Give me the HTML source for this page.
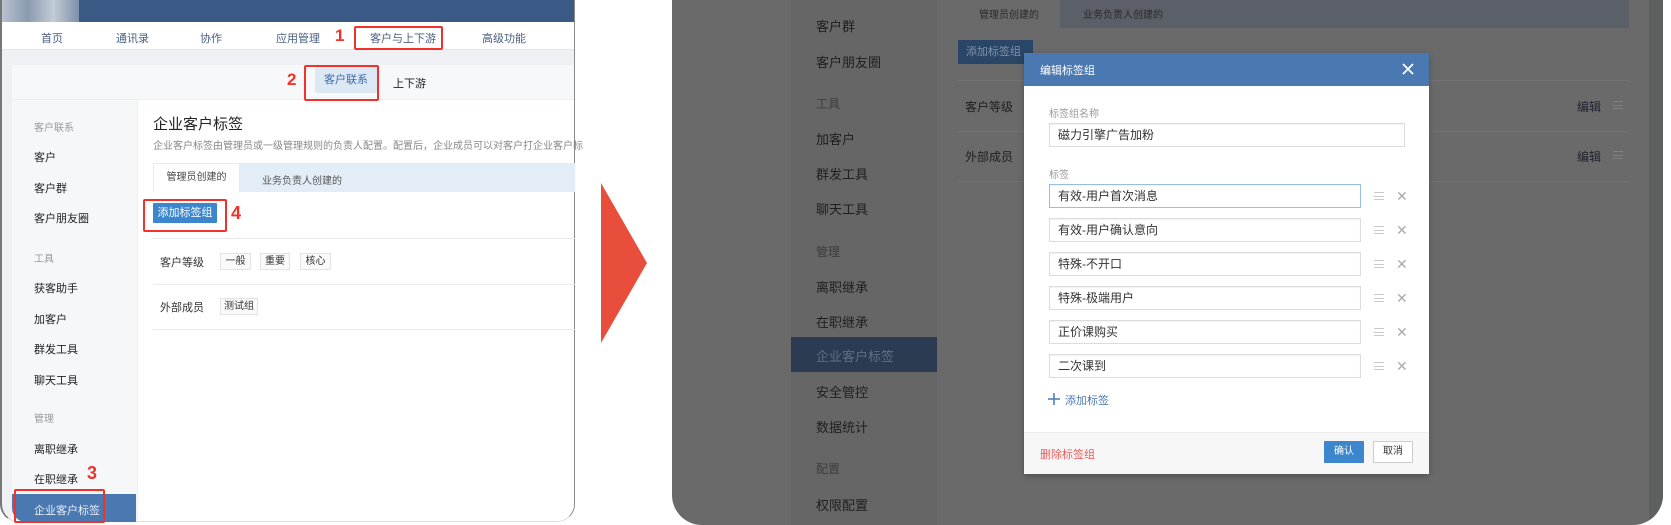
<!DOCTYPE html>
<html><head><meta charset="utf-8"><style>
*{margin:0;padding:0;box-sizing:border-box}
body{width:1671px;height:525px;background:#fff;position:relative;overflow:hidden;font-family:"Liberation Sans","Noto Sans CJK SC",sans-serif;}
.a{position:absolute;white-space:nowrap}
.red{color:#f0322a;font-weight:bold;font-size:17px}
.rb{position:absolute;border:2px solid #f0322a;border-radius:2px}
.t13{font-size:12px;color:#333}
.tag{position:absolute;border:1px solid #e3e3e3;background:#fafafa;font-size:10px;color:#333;text-align:center;line-height:15px;height:17px}
.inp{position:absolute;left:1049px;width:312px;height:24px;border:1px solid #dcdcdc;background:#fff;font-size:12px;color:#333;padding-left:8px;line-height:22px;box-shadow:inset 0 1px 1px rgba(0,0,0,.05)}
.ham{position:absolute;width:10px;height:8px;border-top:1px solid #c9c9c9;border-bottom:1px solid #c9c9c9}
.ham:after{content:"";position:absolute;left:0;right:0;top:2.5px;border-top:1px solid #c9c9c9}
.ham.d{border-color:#808080}.ham.d:after{border-color:#808080}
.x{position:absolute;font-size:14px;color:#aaa;line-height:14px}
.sd{position:absolute;left:816px;font-size:13px;color:#1f1f1f}
.sg{position:absolute;left:816px;font-size:12px;color:#3d3d3d}
</style></head><body>

<!-- LEFT PANEL -->
<div class="a" style="left:0;top:0;width:575px;height:522px;border-right:1px solid #8a8a8a;border-left:2px solid #777;border-bottom:1px solid #ddd;border-radius:0 0 18px 18px;overflow:hidden;background:#eef0f3">
  <div class="a" style="left:0;top:0;width:575px;height:22px;background:#3a5a85"></div>
  <div class="a" style="left:0;top:0;width:77px;height:22px;background:linear-gradient(90deg,#b8c2cf,#8a9ab0,#c3ccd6,#7d90aa)"></div>
  <div class="a" style="left:0;top:22px;width:575px;height:28px;background:#fff;border-bottom:1px solid #e5e5e5"></div>
  <div class="a" style="left:10px;top:65px;width:570px;height:460px;background:#fff"></div>
  <div class="a" style="left:10px;top:65px;width:570px;height:35px;background:#f7f8fa;border-bottom:1px solid #eceef1"></div>
  <div class="a" style="left:10px;top:100px;width:126px;height:425px;background:#f6f7f9;border-right:1px solid #eceef1"></div>
</div>
<div class="a t13" style="left:41px;top:30px;font-size:11px;color:#4a5f80">首页</div>
<div class="a t13" style="left:116px;top:30px;font-size:11px;color:#4a5f80">通讯录</div>
<div class="a t13" style="left:200px;top:30px;font-size:11px;color:#4a5f80">协作</div>
<div class="a t13" style="left:276px;top:30px;font-size:11px;color:#4a5f80">应用管理</div>
<div class="a red" style="left:335px;top:26px">1</div>
<div class="a t13" style="left:370px;top:30px;font-size:11px;color:#4a5f80">客户与上下游</div>
<div class="a" style="left:368px;top:48px;width:58px;height:2px;background:#3a5a85"></div>
<div class="rb" style="left:354px;top:26px;width:89px;height:24px"></div>
<div class="a t13" style="left:482px;top:30px;font-size:11px;color:#4a5f80">高级功能</div>

<div class="a red" style="left:287px;top:70px">2</div>
<div class="a" style="left:315px;top:67px;width:62px;height:26px;background:#dde8f5;border-radius:2px;font-size:11px;color:#3d6ca6;text-align:center;line-height:26px">客户联系</div>
<div class="rb" style="left:304px;top:65px;width:75px;height:36px"></div>
<div class="a" style="left:393px;top:75px;font-size:11px;color:#222">上下游</div>

<div class="a" style="left:34px;top:119px;font-size:10px;color:#999">客户联系</div>
<div class="a" style="left:34px;top:149px;font-size:11px;color:#222">客户</div>
<div class="a" style="left:34px;top:180px;font-size:11px;color:#222">客户群</div>
<div class="a" style="left:34px;top:210px;font-size:11px;color:#222">客户朋友圈</div>
<div class="a" style="left:34px;top:250px;font-size:10px;color:#999">工具</div>
<div class="a" style="left:34px;top:280px;font-size:11px;color:#222">获客助手</div>
<div class="a" style="left:34px;top:311px;font-size:11px;color:#222">加客户</div>
<div class="a" style="left:34px;top:341px;font-size:11px;color:#222">群发工具</div>
<div class="a" style="left:34px;top:372px;font-size:11px;color:#222">聊天工具</div>
<div class="a" style="left:34px;top:410px;font-size:10px;color:#999">管理</div>
<div class="a" style="left:34px;top:441px;font-size:11px;color:#222">离职继承</div>
<div class="a" style="left:34px;top:471px;font-size:11px;color:#222">在职继承</div>
<div class="a red" style="left:87px;top:463px;font-size:18px">3</div>
<div class="a" style="left:12px;top:494px;width:124px;height:28px;background:#4a78b0;border-bottom-left-radius:14px"></div>
<div class="a" style="left:34px;top:502px;font-size:11px;color:#e8eef6">企业客户标签</div>
<div class="rb" style="left:14px;top:489px;width:91px;height:34px"></div>

<div class="a" style="left:153px;top:113px;font-size:15px;color:#222">企业客户标签</div>
<div class="a" style="left:153px;top:137px;font-size:10px;color:#888">企业客户标签由管理员或一级管理规则的负责人配置。配置后，企业成员可以对客户打企业客户标</div>
<div class="a" style="left:240px;top:163px;width:335px;height:29px;background:#e3edf8"></div>
<div class="a" style="left:153px;top:163px;width:87px;height:29px;background:#fff;border:1px solid #e6ebf1;border-bottom:none;font-size:10px;color:#444;text-align:center;line-height:28px">管理员创建的</div>
<div class="a" style="left:262px;top:172px;font-size:10px;color:#555">业务负责人创建的</div>
<div class="a" style="left:153px;top:203px;width:64px;height:20px;background:#3b86cc;color:#fff;font-size:11px;text-align:center;line-height:20px;border-radius:1px">添加标签组</div>
<div class="rb" style="left:143px;top:199px;width:84px;height:33px"></div>
<div class="a red" style="left:231px;top:203px;font-size:18px">4</div>
<div class="a" style="left:153px;top:238px;width:422px;height:1px;background:#ebebeb"></div>
<div class="a" style="left:160px;top:254px;font-size:11px;color:#333">客户等级</div>
<div class="tag" style="left:220px;top:253px;width:31px">一般</div>
<div class="tag" style="left:260px;top:253px;width:30px">重要</div>
<div class="tag" style="left:300px;top:253px;width:31px">核心</div>
<div class="a" style="left:153px;top:284px;width:422px;height:1px;background:#ebebeb"></div>
<div class="a" style="left:160px;top:299px;font-size:11px;color:#333">外部成员</div>
<div class="tag" style="left:220px;top:298px;width:38px">测试组</div>
<div class="a" style="left:153px;top:329px;width:422px;height:1px;background:#ebebeb"></div>

<!-- ARROW -->
<svg class="a" style="left:600px;top:182px" width="48" height="162"><polygon points="1,1 47,81 1,161" fill="#e94e3c"/></svg>

<!-- RIGHT PANEL -->
<div class="a" style="left:672px;top:-40px;width:991px;height:565px;background:#6a6a6a;border-radius:30px;overflow:hidden">
  <div class="a" style="left:119px;top:40px;width:146px;height:525px;background:#666"></div>
  <div class="a" style="left:119px;top:377px;width:146px;height:35px;background:#2c3a52"></div>
  <div class="a" style="left:388px;top:40px;width:569px;height:28px;background:#5a5f68"></div>
  <div class="a" style="left:977px;top:0;width:14px;height:565px;background:#5e5f5f"></div>
  <div class="a" style="left:285px;top:120px;width:672px;height:1px;background:#737373"></div>
  <div class="a" style="left:285px;top:171px;width:672px;height:1px;background:#737373"></div>
  <div class="a" style="left:285px;top:221px;width:672px;height:1px;background:#737373"></div>
</div>
<div class="a" style="left:979px;top:6px;font-size:10px;color:#2a2a2a">管理员创建的</div>
<div class="a" style="left:1083px;top:6px;font-size:10px;color:#2a2a2a">业务负责人创建的</div>
<div class="a" style="left:958px;top:40px;width:75px;height:24px;background:#2a4666;color:#7f93ab;font-size:11px;line-height:24px;padding-left:8px">添加标签组</div>
<div class="a" style="left:965px;top:98px;font-size:12px;color:#1f1f1f">客户等级</div>
<div class="a" style="left:965px;top:148px;font-size:12px;color:#1f1f1f">外部成员</div>
<div class="a" style="left:1577px;top:98px;font-size:12px;color:#1f2330">编辑</div>
<div class="a" style="left:1577px;top:148px;font-size:12px;color:#1f2330">编辑</div>
<div class="ham d" style="left:1613px;top:101px"></div>
<div class="ham d" style="left:1613px;top:151px"></div>

<div class="sd" style="top:16px">客户群</div>
<div class="sd" style="top:52px">客户朋友圈</div>
<div class="sg" style="top:95px">工具</div>
<div class="sd" style="top:129px">加客户</div>
<div class="sd" style="top:164px">群发工具</div>
<div class="sd" style="top:199px">聊天工具</div>
<div class="sg" style="top:243px">管理</div>
<div class="sd" style="top:277px">离职继承</div>
<div class="sd" style="top:312px">在职继承</div>
<div class="sd" style="top:346px;color:#5f6f87">企业客户标签</div>
<div class="sd" style="top:382px">安全管控</div>
<div class="sd" style="top:417px">数据统计</div>
<div class="sg" style="top:460px">配置</div>
<div class="sd" style="top:495px">权限配置</div>

<!-- MODAL -->
<div class="a" style="left:1024px;top:53px;width:405px;height:421px;background:#fff;box-shadow:0 2px 6px rgba(0,0,0,.25)"></div>
<div class="a" style="left:1024px;top:53px;width:405px;height:33px;background:#4a78b0"></div>
<div class="a" style="left:1040px;top:62px;font-size:11px;color:#fff">编辑标签组</div>
<svg class="a" style="left:1402px;top:63px" width="12" height="12"><path d="M1 1L11 11M11 1L1 11" stroke="#fff" stroke-width="1.8"/></svg>
<div class="a" style="left:1049px;top:105px;font-size:10px;color:#999">标签组名称</div>
<div class="inp" style="top:123px;width:356px">磁力引擎广告加粉</div>
<div class="a" style="left:1049px;top:166px;font-size:10px;color:#999">标签</div>
<div class="inp" style="top:184px;border-color:#9cbde3">有效-用户首次消息</div>
<div class="inp" style="top:218px">有效-用户确认意向</div>
<div class="inp" style="top:252px">特殊-不开口</div>
<div class="inp" style="top:286px">特殊-极端用户</div>
<div class="inp" style="top:320px">正价课购买</div>
<div class="inp" style="top:354px">二次课到</div>
<div class="ham" style="left:1374px;top:192px"></div><div class="x" style="left:1396px;top:189px">✕</div>
<div class="ham" style="left:1374px;top:226px"></div><div class="x" style="left:1396px;top:223px">✕</div>
<div class="ham" style="left:1374px;top:260px"></div><div class="x" style="left:1396px;top:257px">✕</div>
<div class="ham" style="left:1374px;top:294px"></div><div class="x" style="left:1396px;top:291px">✕</div>
<div class="ham" style="left:1374px;top:328px"></div><div class="x" style="left:1396px;top:325px">✕</div>
<div class="ham" style="left:1374px;top:362px"></div><div class="x" style="left:1396px;top:359px">✕</div>
<svg class="a" style="left:1048px;top:393px" width="12" height="12"><path d="M6 0V12M0 6H12" stroke="#4a78b0" stroke-width="1.5"/></svg>
<div class="a" style="left:1065px;top:392px;font-size:11px;color:#4a78b0">添加标签</div>
<div class="a" style="left:1024px;top:432px;width:405px;height:42px;background:#f7f7f7;border-top:1px solid #ececec"></div>
<div class="a" style="left:1040px;top:446px;font-size:11px;color:#e85a5a">删除标签组</div>
<div class="a" style="left:1324px;top:441px;width:40px;height:22px;background:#3b86cc;color:#fff;font-size:10px;text-align:center;line-height:22px;border-radius:1px">确认</div>
<div class="a" style="left:1373px;top:441px;width:40px;height:22px;background:#fff;border:1px solid #ccc;color:#333;font-size:10px;text-align:center;line-height:20px;border-radius:1px">取消</div>
</body></html>
